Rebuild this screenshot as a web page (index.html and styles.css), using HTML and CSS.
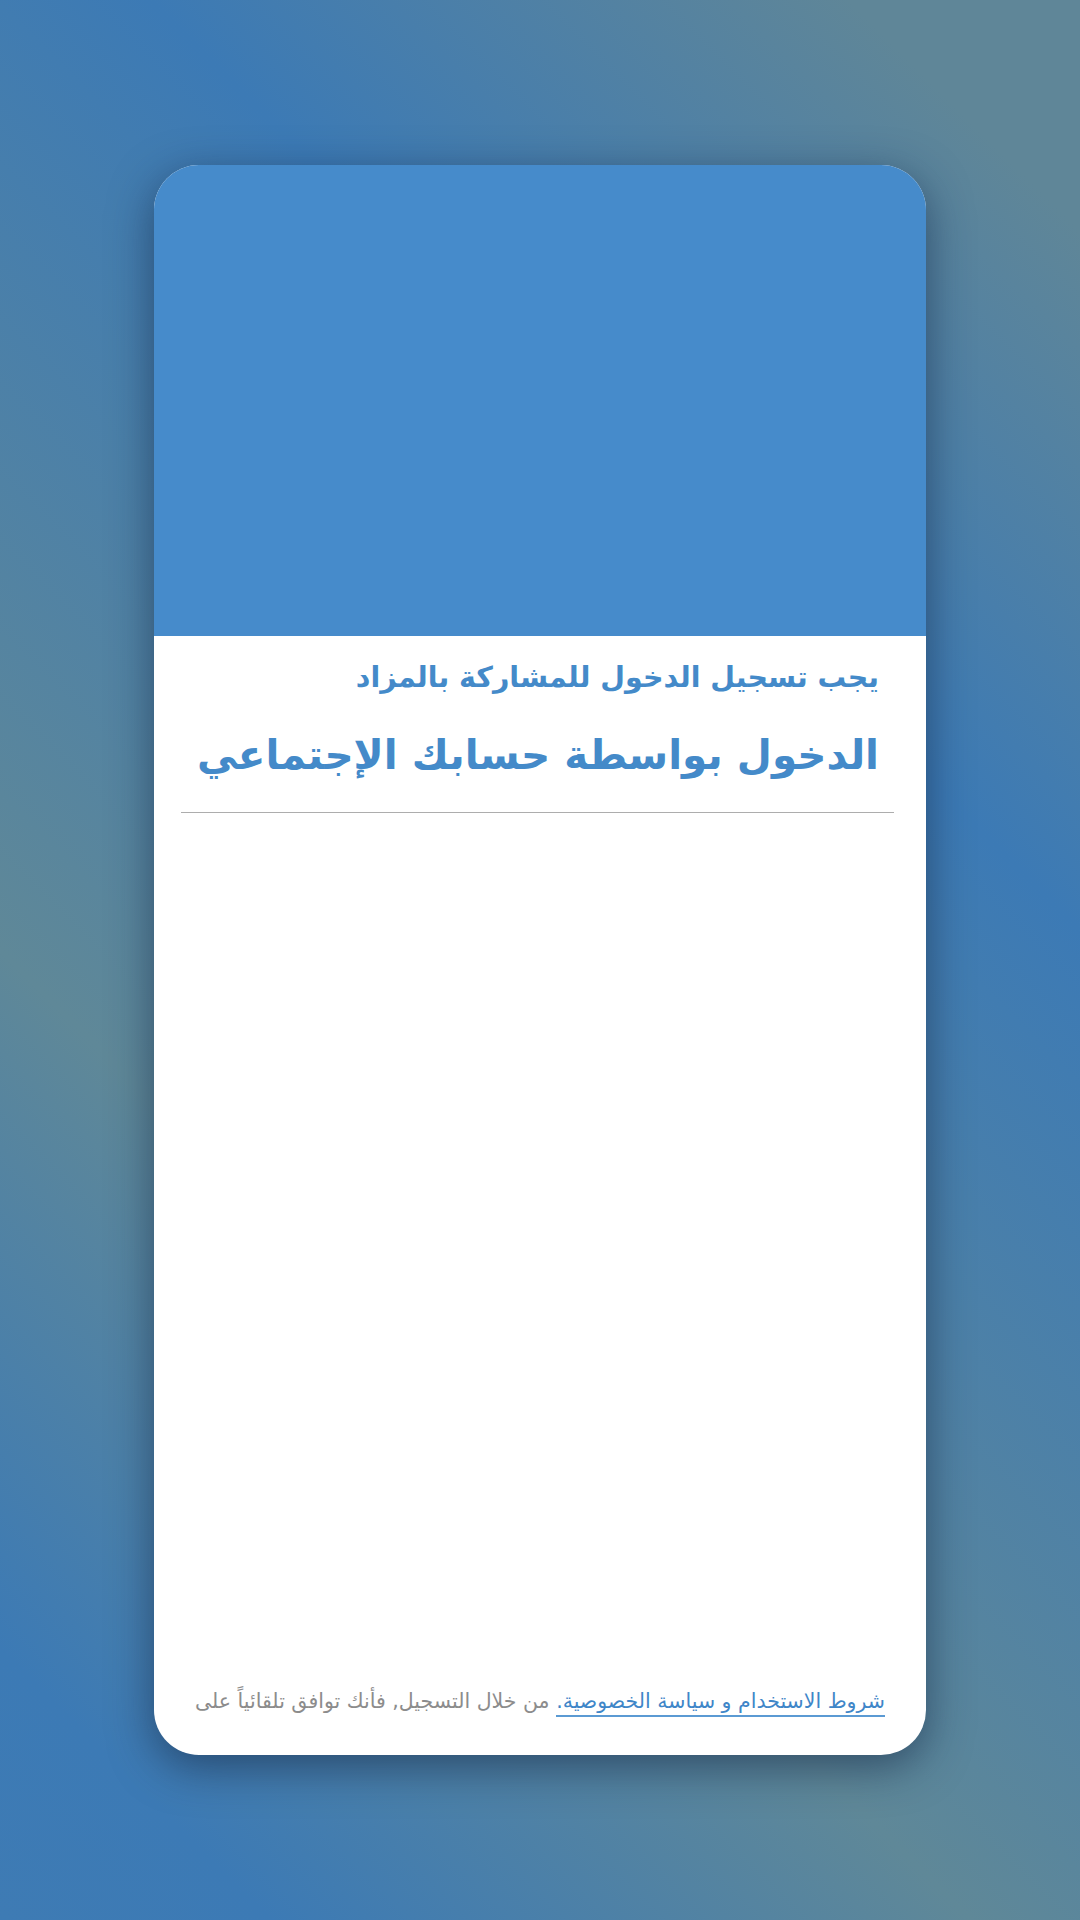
FILE: index.html
```html
<!DOCTYPE html>
<html lang="ar">
<head>
<meta charset="utf-8">
<title>تسجيل الدخول</title>
<link rel="stylesheet" href="styles.css">
</head>
<body>
<main class="card">
  <div class="hero"></div>
  <section class="intro" dir="rtl">
    <h2 class="subtitle">يجب تسجيل الدخول للمشاركة بالمزاد</h2>
    <h1 class="title">الدخول بواسطة حسابك الإجتماعي</h1>
  </section>
  <hr class="divider">
  <div class="spacer"></div>
  <p class="terms" dir="ltr"><span class="terms-text" dir="rtl">من خلال التسجيل, فأنك توافق تلقائياً على</span> <a class="terms-link" href="#" dir="rtl">شروط الاستخدام و سياسة الخصوصية.</a></p>
</main>
</body>
</html>
```

FILE: styles.css
```css
html, body {
  margin: 0;
  padding: 0;
}

body {
  width: 1080px;
  height: 1920px;
  overflow: hidden;
  font-family: "DejaVu Sans", "Noto Sans", sans-serif;
  background: linear-gradient(45deg,
    #3e7bb4 0px,
    #3c7ab5 191px,
    #5f8898 686px,
    #3c7ab5 1464px,
    #5f8698 1958px,
    #5f8698 2121px);
  padding-top: 165px;
  box-sizing: border-box;
}

.card {
  width: 772px;
  height: 1590px;
  margin: 0 auto;
  background: #ffffff;
  border-radius: 45px;
  overflow: hidden;
  display: flex;
  flex-direction: column;
  box-shadow: 0 12px 44px rgba(20, 40, 70, 0.6);
}

.hero {
  height: 471px;
  flex: none;
  background: #468bcb;
}

.intro {
  padding: 18px 47px 0 30px;
  text-align: right;
  color: #448ac9;
}

.subtitle {
  margin: 0;
  font-size: 28.5px;
  font-weight: bold;
  line-height: 48px;
  white-space: nowrap;
}

.title {
  margin: 8px 0 0;
  font-size: 40.5px;
  font-weight: bold;
  line-height: 90px;
  white-space: nowrap;
}

.divider {
  border: 0;
  height: 1px;
  background: #adadad;
  margin: 12px 32px 0 27px;
  flex: none;
}

.spacer {
  flex: 1;
}

.terms {
  margin: 0 0 40px;
  text-align: center;
  font-size: 20.5px;
  line-height: 28px;
  color: #8c8c8c;
  white-space: nowrap;
}

.terms-text,
.terms-link {
  unicode-bidi: isolate;
}

.terms-link {
  color: #3f86c8;
  text-decoration: none;
  border-bottom: 2px solid #5b9ad3;
  padding-bottom: 2px;
}
```
